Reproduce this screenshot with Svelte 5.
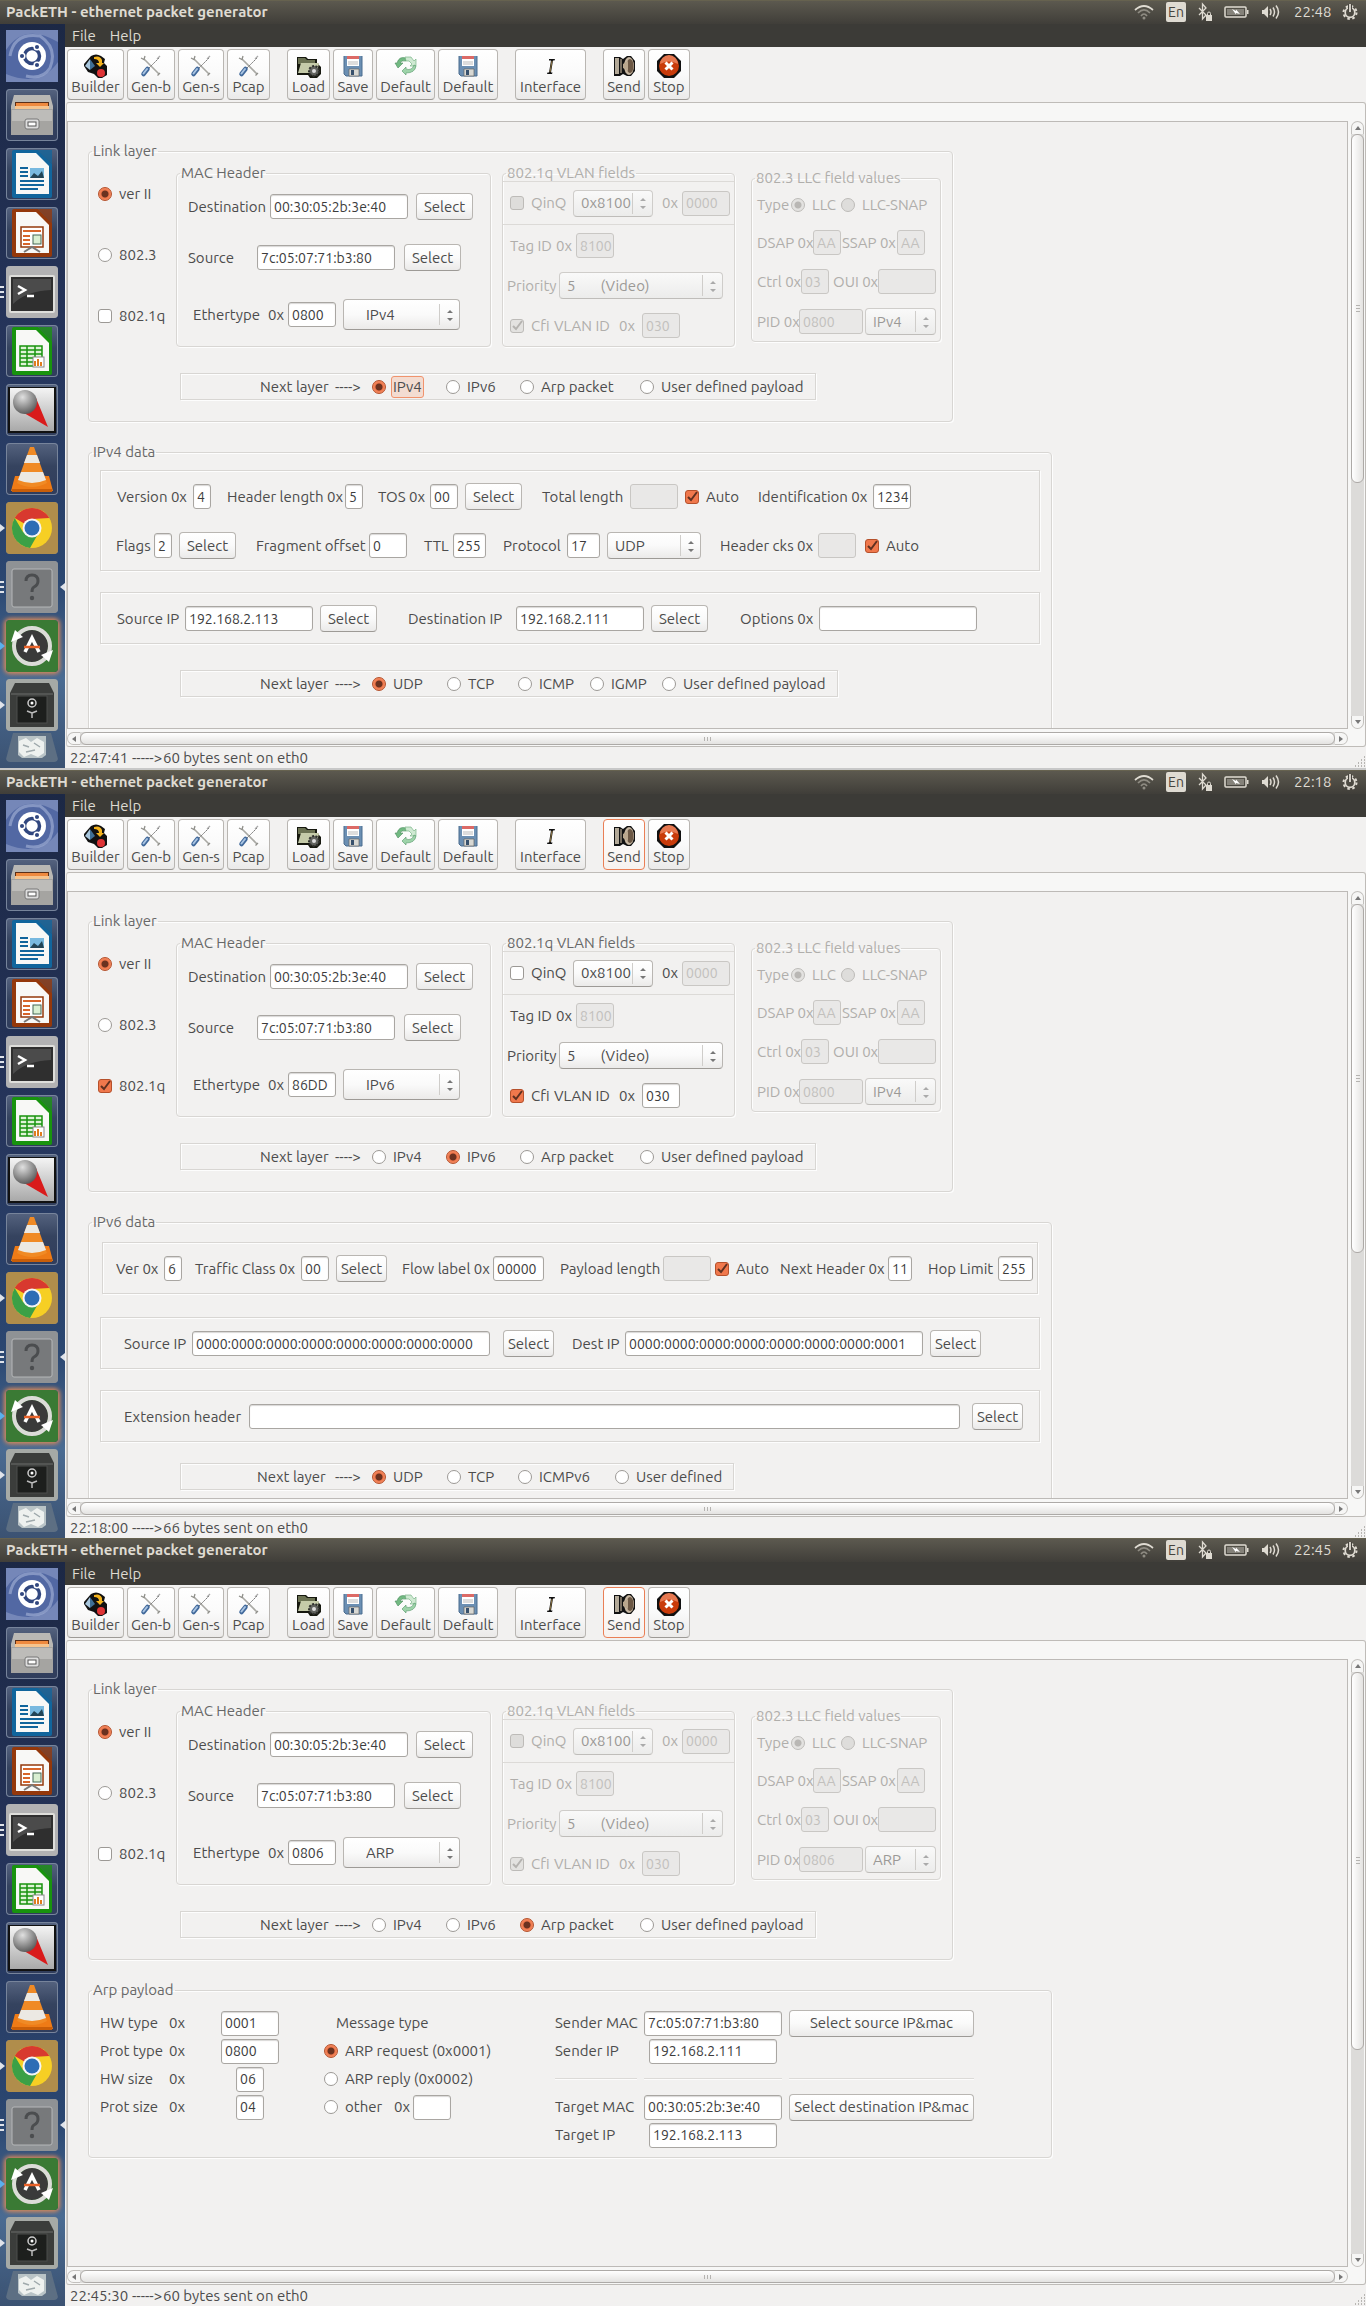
<script>
  const screens = [
    {
      id: 'a', kind: 'ipv4', clock: '22:48', status: '22:47:41', bytes: '60 bytes sent on eth0',
      vlan: false, type: '0800', typeName: 'IPv4', pid: '0800', pidName: 'IPv4', next: 'IPv4', focus: true, thumb: 60
    },
    {
      id: 'b', kind: 'ipv6', clock: '22:18', status: '22:18:00', bytes: '66 bytes sent on eth0',
      vlan: true, type: '86DD', typeName: 'IPv6', pid: '0800', pidName: 'IPv4', next: 'IPv6', send: true, thumb: 60
    },
    {
      id: 'c', kind: 'arp', clock: '22:45', status: '22:45:30', bytes: '60 bytes sent on eth0',
      vlan: false, type: '0806', typeName: 'ARP', pid: '0806', pidName: 'ARP', next: 'Arp packet', send: true, thumb: 65
    }
  ];
  const tools = [
    ['Builder', 'builder'], ['Gen-b', 'tools'], ['Gen-s', 'tools'], ['Pcap', 'tools'], null,
    ['Load', 'load'], ['Save', 'save'], ['Default', 'cycle'], ['Default', 'save'], null,
    ['Interface', 'iface'], null, ['Send', 'send'], ['Stop', 'stop']
  ];
  const apps = [
    ['dash', 'Dash home', ''], ['files', 'Files', ''], ['writer', 'Writer', ''], ['impress', 'Impress', ''],
    ['term', 'Terminal', 'three'], ['calc', 'Calc', ''], ['ball', 'Xpilot', ''], ['vlc', 'VLC', ''],
    ['chrome', 'Chrome', 'one'], ['unknown', 'PackETH', 'two active'], ['updater', 'Software Updater', 'blue'],
    ['safe', 'Disk', 'one'], ['trash', 'Trash', '']
  ];
</script>

{#snippet field(text, value, w, off = false)}
  <label class="pair"><span>{text}</span><input type="text" class="w{w}" {value} disabled={off} /></label>
{/snippet}

{#snippet field2(text, prefix, value, w, off = false)}
  <label class="pair"><span>{text}</span><span>{prefix}</span><input type="text" class="w{w}" {value} disabled={off} /></label>
{/snippet}

{#snippet radio(name, text, checked = false, off = false, focus = false)}
  <label class="opt" class:off><input type="radio" {name} {checked} disabled={off} /><span class:focus>{text}</span></label>
{/snippet}

{#snippet check(text, checked = false, off = false)}
  <label class="opt" class:off><input type="checkbox" {checked} disabled={off} /><span>{text}</span></label>
{/snippet}

{#snippet pick(label, value, cls, off = false)}
  <span class="pick {cls}" class:off>
    <select aria-label={label} disabled={off}><option>{value}</option></select>
    <svg viewBox="0 0 8 12" width="8" height="12" aria-hidden="true"><path d="M1 4 4 1 7 4ZM1 9 4 12 7 9Z" /></svg>
  </span>
{/snippet}

{#snippet toolIcon(k)}
  <svg viewBox="0 0 24 24" width="24" height="24" aria-hidden="true">
    {#if k === 'builder'}
      <path d="M7 2 Q12-1 17 2L21 5 20 9 23 12V21L18 24H14L10 20 4 18 0 12V10Z" fill="#111" />
      <path d="M6 5 1 12 6 16Z" fill="#a8c6dd" /><path d="M6 5 11 12 6 16Z" fill="#3f6f96" />
      <path d="M10 3Q16 1 18 6V9H20L16 13 12 9H15Q15 5 10 5Z" fill="#f3b31e" /><circle cx="17" cy="19" r="4" fill="#df3436" />
    {:else if k === 'tools'}
      <path d="M5 5 20 20" stroke="#a9a9a4" stroke-width="1.600" /><path d="M2 4 5 5.500 6 2M18.500 21.500 21 19" fill="none" stroke="#8f8f8a" stroke-width="1.300" />
      <path d="M20 4 10 14" stroke="#6c6c6c" stroke-width="1" stroke-dasharray="2 1" /><path d="M18 5 21 2" stroke="#aaa" stroke-width="1.300" />
      <path d="M8.500 15 4.500 20" stroke="#41699b" stroke-width="4.500" stroke-linecap="round" /><path d="M8 15 4.500 19.500" stroke="#a9c4e2" stroke-width="2" stroke-linecap="round" />
    {:else if k === 'load'}
      <path d="M0 3H9L11 5H20V9L24 13V20L20 24H13L11 21H0Z" fill="#16180f" /><path d="M1 4H8L10 6H18V10H1Z" fill="#6b7253" />
      <path d="M4 9H22L20 19H1Z" fill="#c5cba9" /><circle cx="17" cy="17" r="5" fill="#62645f" stroke="#30312e" stroke-dasharray="2 1.5" stroke-width="2" /><circle cx="17" cy="17" r="2" fill="#ddd" />
    {:else if k === 'save'}
      <path d="M3 2H21V22H5L3 20Z" fill="#6b8fb3" /><path d="M3 2V20L5 22H21V2" fill="none" stroke="#4b6c8f" /><path d="M6 2H18V12H6Z" fill="#fff" /><path d="M6 2H18V5H6Z" fill="#dc6a66" />
      <path d="M7 8H17M7 10H17" stroke="#bbb" /><path d="M8 15H18V22H8Z" fill="#d8d8d3" stroke="#666" stroke-width=".7" /><path d="M10 16H13V21H10Z" fill="#37506c" />
    {:else if k === 'cycle'}
      <path d="M12 4Q5 2 3 9L1 9 4 14 9 9H6Q7 6 12 7Z" fill="#72b982" stroke="#4d8d60" stroke-width=".6" />
      <path d="M11 3 17 3 20 7 22 5V12H16L18 10 15 7H12Z" fill="#cfe9d2" stroke="#6aab79" stroke-width=".6" />
      <path d="M8 17 12 13V15Q18 17 20 11L22 12Q21 19 12 19V21Z" fill="#9dd3a9" stroke="#549768" stroke-width=".6" />
    {:else if k === 'iface'}
      <path d="M10 5H16L15.500 6.500H14L12 18.500H13.500L13 20H8L8.500 18.500H10L12 6.500H10Z" fill="#111" /><path d="M13 7 11 18" stroke="#8d7544" />
    {:else if k === 'send'}
      <path d="M2 3H8L11 5 15 2H19L23 7V17L19 22H15L11 20 8 22H2Z" fill="#111" /><path d="M3 4H7V20H3Z" fill="#b3a998" /><path d="M8 5H10V19H8Z" fill="#756c5f" />
      <ellipse cx="17" cy="12" rx="5" ry="9" fill="#c7b6a0" /><ellipse cx="18" cy="12" rx="3.500" ry="7" fill="#6c5845" /><path d="M11 10 16 7V17L11 14Z" fill="#baa78d" />
    {:else}
      <path d="M7 0H17L24 7V17L17 24H7L0 17V7Z" fill="#111" /><circle cx="12" cy="12" r="10" fill="#c93b0a" /><path d="M3 10A9 9 0 0 1 21 10Q12 5 3 10" fill="#e67850" />
      <path d="M8.500 8.500 15.500 15.500M15.500 8.500 8.500 15.500" stroke="#fff" stroke-width="3" />
    {/if}
  </svg>
{/snippet}

{#snippet appIcon(k)}
  <svg viewBox="0 0 52 52" width="52" height="52" aria-hidden="true">
    {#if k === 'dash'}
      <rect width="52" height="52" rx="4" fill="#5268a3" /><path d="M0 20Q18-8 52 12V0H0ZM52 32Q34 58 0 44V52H52Z" fill="#7587b8" />
      <path d="M4 26Q8 2 34 6Q52 18 44 38Q36 50 20 46" fill="none" stroke="#a8b6d8" stroke-width="3" opacity=".6" />
      <circle cx="26" cy="26" r="14" fill="#fff" /><circle cx="26" cy="26" r="7.500" fill="none" stroke="#31477f" stroke-width="3.500" />
      <g stroke="#fff" stroke-width="1.500" fill="#31477f"><circle cx="16" cy="26" r="2.800" /><circle cx="31" cy="17" r="2.800" /><circle cx="31" cy="35" r="2.800" /></g>
    {:else if k === 'files'}
      <path d="M8 6H44L47 17V44H5V17Z" fill="#b9b8b4" /><path d="M9 13H43V20H9Z" fill="#5b2f18" /><path d="M10 14H42V20H10Z" fill="#ef8a3f" /><path d="M9 17H43V20H9Z" fill="#f6c48e" />
      <path d="M5 20H47V46H5Z" fill="#a5a4a1" /><path d="M6 21H46V32H6Z" fill="#bdbcb9" /><rect x="19" y="30" width="14" height="10" rx="2" fill="#ddd" stroke="#777" /><rect x="22" y="33" width="8" height="4" fill="#fff" stroke="#555" />
    {:else if k === 'writer' || k === 'impress' || k === 'calc'}
      {@const c = k === 'writer' ? '#11659c' : k === 'impress' ? '#94380b' : '#18930e'}
      <path d="M8 2H32L46 16V48Q46 50 44 50H8Q6 50 6 48V4Q6 2 8 2Z" fill={c} /><path d="M32 2H46V16Z" fill={c} opacity=".75" />
      <path d="M10 5H30L43 18V46H10Z" fill="#f8f8f6" />
      {#if k === 'writer'}
        <path d="M14 20H22M14 24H22M14 28H22M14 33H38M14 37H38M14 41H32" stroke={c} stroke-width="2" /><path d="M24 20H38V30H24Z" fill="#78b9df" /><path d="M24 30 28 25 32 28 36 23 38 30Z" fill="#245" />
      {:else if k === 'impress'}
        <rect x="15" y="20" width="22" height="20" fill="#fff" stroke={c} stroke-width="1.500" /><path d="M17 24H35M17 29H24M17 33H24M17 37H24" stroke="#d8652a" stroke-width="2" /><rect x="27" y="28" width="8" height="9" fill="#d9efd2" stroke="#465" /><path d="M18 45 26 40 34 45" fill="none" stroke="#777" stroke-width="2" />
      {:else}
        <path d="M14 21H36V41H14ZM14 25H36M14 29H36M14 33H36M14 37H36M21 21V41M29 21V41" fill="#dff3d7" stroke={c} stroke-width="1.500" /><rect x="27" y="32" width="11" height="10" fill="#fff" stroke="#888" /><path d="M29 41V36M32 41V34M35 41V37" stroke="#e07c1f" stroke-width="2" />
      {/if}
    {:else if k === 'term'}
      <rect width="52" height="52" rx="4" fill="#b2b2b3" /><rect x="3" y="9" width="46" height="38" rx="2" fill="#dededb" /><rect x="5" y="11" width="42" height="34" fill="#2f2f2f" /><path d="M7 13H45V24Q20 25 7 38Z" fill="#4b4b4b" />
      <path d="M12 20 19 24 12 28M21 30H28" fill="none" stroke="#fff" stroke-width="2.500" />
    {:else if k === 'ball'}
      <defs>
        <radialGradient id="ball-grey" cx=".4" cy=".3" r=".7"><stop offset="0" stop-color="#e0e0e0" /><stop offset="1" stop-color="#5e5e5e" /></radialGradient>
        <linearGradient id="ball-bg" x2="0" y2="1"><stop offset="0" stop-color="#f4f4f4" /><stop offset="1" stop-color="#a9a9a9" /></linearGradient>
      </defs>
      <rect x="2" y="3" width="48" height="46" fill="#111" /><rect x="4" y="4" width="44" height="43" fill="url(#ball-bg)" /><path d="M30 14 42 43 18 29Z" fill="#d91b1b" /><circle cx="19" cy="18" r="12" fill="url(#ball-grey)" />
    {:else if k === 'vlc'}
      <path d="M9 33H43L47 48H5Z" fill="#ee7b16" /><path d="M24 4H28L41 40Q26 48 11 40Z" fill="#f08a25" /><path d="M21 12H31L34 20H18ZM15 29H37L40 37Q26 43 12 37Z" fill="#ece9e3" /><path d="M6 46H46V49H6Z" fill="#c95e08" />
    {:else if k === 'chrome'}
      <rect width="52" height="52" rx="4" fill="#b08d4b" /><circle cx="26" cy="26" r="20" fill="#f6cf24" /><path d="M26 26 8.700 16A20 20 0 0 1 43.300 16L26 17Z" fill="#d8392f" /><path d="M8.700 16A20 20 0 0 0 24 46L32 32 17 30Z" fill="#3ba046" />
      <circle cx="26" cy="26" r="9.500" fill="#f5f5f5" /><circle cx="26" cy="26" r="7.500" fill="#2d6db5" />
    {:else if k === 'unknown'}
      <rect width="52" height="52" rx="4" fill="#8f9295" /><rect x="6" y="8" width="40" height="38" rx="2" fill="#77797b" stroke="#b5b7b9" />
      <path d="M20 20Q20 14 26 14T32 20Q32 24 28 26Q26 27 26 31" fill="none" stroke="#4b4d4f" stroke-width="3" /><circle cx="26" cy="37" r="2.200" fill="#4b4d4f" />
    {:else if k === 'updater'}
      <rect width="52" height="52" rx="4" fill="#3a7a34" /><circle cx="26" cy="26" r="16" fill="#3a3a3a" /><circle cx="26" cy="26" r="18" fill="none" stroke="#dcdcd8" stroke-width="4" />
      <path d="M5 22 9 10 17 17ZM47 30 43 42 35 35Z" fill="#fff" /><path d="M19 32 26 18 33 32" fill="none" stroke="#fff" stroke-width="3.500" /><path d="M18 27H34" stroke="#e8622a" stroke-width="2.500" />
    {:else if k === 'safe'}
      <rect width="52" height="52" rx="4" fill="#a6aaa6" /><path d="M9 4H43L48 14V48H4V14Z" fill="#3b3d3b" /><path d="M5 15H47" stroke="#6c6e6c" /><rect x="11" y="17" width="30" height="27" fill="#1d1f1d" stroke="#4c4e4c" /><circle cx="26" cy="24" r="4" fill="none" stroke="#ccc" stroke-width="1.500" /><circle cx="26" cy="24" r="1.500" fill="#fff" /><path d="M26 34V39M26 34 21 32M26 34 31 32" stroke="#bbb" stroke-width="1.500" />
    {:else}
      <path d="M7 0H45L52 26Q52 29 49 29H3Q0 29 0 26Z" fill="#5d6f83" /><path d="M12 3H40V22L36 25H16L12 22Z" fill="#b9c3c6" /><path d="M13 8 20 5 25 9 31 5 38 9V20L32 24 25 21 18 24 13 19Z" fill="#eef1ef" />
      <path d="M17 12 23 14M28 10 34 14M20 19 29 17" stroke="#9fa9ac" stroke-width="1.500" />
    {/if}
  </svg>
{/snippet}

<main class="page">
  {#each screens as s (s.id)}
    <section class="screen">
      <header class="title">
        <h1>PackETH - ethernet packet generator</h1>
        <svg class="i-wifi" viewBox="0 0 20 16" width="20" height="16" aria-hidden="true"><g fill="none" stroke-width="1.700"><path d="M1 6Q10-2 19 6" stroke="#dfdbd2" /><path d="M4 9Q10 3 16 9M7 12Q10 8 13 12" stroke="#8f8c83" /></g><circle cx="10" cy="14" r="1.500" fill="#8f8c83" /></svg>
        <span class="lang">En</span>
        <svg class="i-bt" viewBox="0 0 16 20" width="16" height="20" aria-hidden="true"><path d="M2 6 9 13 5.500 17V2L9 6 2 13" fill="none" stroke="#dfdbd2" stroke-width="1.300" /><path d="M9 13H15V19H9Z" fill="#dfdbd2" /><path d="M10.500 13V11.500A1.500 1.500 0 0 1 13.500 11.500V13" fill="none" stroke="#dfdbd2" /></svg>
        <svg class="i-bat" viewBox="0 0 25 12" width="25" height="12" aria-hidden="true"><rect x="1" y="1" width="21" height="10" rx="1" fill="none" stroke="#dfdbd2" stroke-width="1.500" /><rect x="3" y="3" width="17" height="6" fill="#85827a" /><path d="M23 4H24.500V8H23Z" fill="#dfdbd2" /><path d="M8 3 12 5V3.500L16 8 12 7V8.500Z" fill="#fff" /></svg>
        <svg class="i-vol" viewBox="0 0 20 16" width="20" height="16" aria-hidden="true"><path d="M1 6H3L7 2V14L3 10H1Z" fill="#dfdbd2" /><path d="M9 5Q11 8 9 11M12 3.500Q15 8 12 12.500M15 1.500Q20 8 15 14.500" fill="none" stroke="#dfdbd2" stroke-width="1.500" /></svg>
        <time>{s.clock}</time>
        <svg class="i-gear" viewBox="0 0 16 16" width="16" height="16" aria-hidden="true"><circle cx="8" cy="8.500" r="6.500" fill="none" stroke="#dfdbd2" stroke-width="2" stroke-dasharray="2.500 2.600" /><circle cx="8" cy="8.500" r="4.800" fill="none" stroke="#dfdbd2" stroke-width="1.700" /><path d="M8 0V8" stroke="#45433d" stroke-width="4" /><path d="M8 0V8" stroke="#dfdbd2" stroke-width="1.800" /></svg>
      </header>

      <nav class="launcher" aria-label="Launcher">
        {#each apps as [k, name, mark]}
          <button class="app {k} {mark}" aria-label={name}>{@render appIcon(k)}</button>
        {/each}
      </nav>

      <div class="window">
        <nav class="menu"><button>File</button><button>Help</button></nav>
        <div class="toolbar">
          {#each tools as t}
            {#if t}
              <button class="tool" class:hot={t[0] === 'Send' && s.send}>{@render toolIcon(t[1])}<span>{t[0]}</span></button>
            {:else}
              <i></i>
            {/if}
          {/each}
        </div>

        <div class="book">
          <div class="pane">
            <fieldset class="link">
              <legend>Link layer</legend>
              <div class="top">
                <div class="vers">
                  {@render radio(s.id + 'ver', 'ver II', true)}
                  {@render radio(s.id + 'ver', '802.3')}
                  {@render check('802.1q', s.vlan)}
                </div>

                <fieldset class="mac">
                  <legend>MAC Header</legend>
                  <div class="inner">
                    <div class="row m1">{@render field('Destination', '00:30:05:2b:3e:40', 138)}<button class="btn">Select</button></div>
                    <div class="row m2">{@render field('Source', '7c:05:07:71:b3:80', 138)}<button class="btn">Select</button></div>
                    <div class="row m3">{@render field2('Ethertype', '0x', s.type, 48)}{@render pick('Ethertype name', s.typeName, 'tall')}</div>
                  </div>
                </fieldset>

                <fieldset class="vlan" class:dim={!s.vlan}>
                  <legend>802.1q VLAN fields</legend>
                  <div class="row v1">
                    {@render check('QinQ', false, !s.vlan)}{@render pick('Outer tag', '0x8100', 'w80', !s.vlan)}
                    <label class="pair"><span class="faint" class:live={s.vlan}>0x</span><input type="text" class="w48" value="0000" disabled /></label>
                  </div>
                  <div class="row v2">{@render field2('Tag ID', '0x', '8100', 38, true)}</div>
                  <div class="row v3"><span>Priority</span>{@render pick('Priority', '5\u2003\u2002\u2009(Video)', 'w164', !s.vlan)}</div>
                  <div class="row v4">{@render check('Cfi', true, !s.vlan)}{@render field2('VLAN ID', '0x', '030', 38, !s.vlan)}</div>
                </fieldset>

                <fieldset class="llc dim">
                  <legend>802.3 LLC field values</legend>
                  <div class="inner">
                    <div class="row l1"><span>Type</span>{@render radio(s.id + 'llc', 'LLC', true, true)}{@render radio(s.id + 'llc', 'LLC-SNAP', false, true)}</div>
                    <div class="row l2">{@render field('DSAP 0x', 'AA', 28, true)}{@render field('SSAP 0x', 'AA', 28, true)}</div>
                    <div class="row l3">{@render field('Ctrl 0x', '03', 28, true)}{@render field('OUI 0x', '', 58, true)}</div>
                    <div class="row l4">{@render field('PID 0x', s.pid, 64, true)}{@render pick('PID name', s.pidName, 'w71', true)}</div>
                  </div>
                </fieldset>
              </div>
              <div class="row box next n1">
                <span>Next layer</span><span>----&gt;</span>
                {#each ['IPv4', 'IPv6', 'Arp packet', 'User defined payload'] as n}
                  {@render radio(s.id + 'next', n, s.next === n, false, !!s.focus && s.next === n)}
                {/each}
              </div>
            </fieldset>

            {#if s.kind === 'ipv4'}
              <fieldset class="data">
                <legend>IPv4 data</legend>
                <div class="inner">
                  <div class="box pad gap8">
                    <div class="row a1">
                      {@render field('Version 0x', '4', 18)}{@render field('Header length 0x', '5', 18)}{@render field('TOS 0x', '00', 28)}
                      <button class="btn">Select</button>{@render field('Total length', '', 48, true)}{@render check('Auto', true)}{@render field('Identification 0x', '1234', 38)}
                    </div>
                    <div class="row a2">
                      {@render field('Flags', '2', 18)}<button class="btn">Select</button>{@render field('Fragment offset', '0', 38)}{@render field('TTL', '255', 33)}
                      {@render field('Protocol', '17', 33)}{@render pick('Protocol name', 'UDP', 'w94')}{@render field('Header cks 0x', '', 38, true)}{@render check('Auto', true)}
                    </div>
                  </div>
                  <div class="box pad gap21">
                    <div class="row a3">
                      {@render field('Source IP', '192.168.2.113', 128)}<button class="btn">Select</button>
                      {@render field('Destination IP', '192.168.2.111', 128)}<button class="btn">Select</button>{@render field('Options 0x', '', 158)}
                    </div>
                  </div>
                  <div class="row box next n2">
                    <span>Next layer</span><span>----&gt;</span>
                    {#each ['UDP', 'TCP', 'ICMP', 'IGMP', 'User defined payload'] as n}{@render radio('ip4next', n, n === 'UDP')}{/each}
                  </div>
                  <div class="rest"></div>
                </div>
              </fieldset>
            {:else if s.kind === 'ipv6'}
              <fieldset class="data">
                <legend>IPv6 data</legend>
                <div class="inner">
                  <div class="box pad gap10">
                    <div class="row b1">
                      {@render field('Ver 0x', '6', 18)}{@render field('Traffic Class 0x', '00', 28)}<button class="btn slim">Select</button>
                      {@render field('Flow label 0x', '00000', 51)}{@render field('Payload length', '', 48, true)}{@render check('Auto', true)}
                      {@render field('Next Header 0x', '11', 24)}{@render field('Hop Limit', '255', 35)}
                    </div>
                  </div>
                  <div class="box pad gap23">
                    <div class="row b2">
                      {@render field('Source IP', '0000:0000:0000:0000:0000:0000:0000:0000', 298)}<button class="btn slim">Select</button>
                      {@render field('Dest IP', '0000:0000:0000:0000:0000:0000:0000:0001', 298)}<button class="btn slim">Select</button>
                    </div>
                  </div>
                  <div class="box pad gap21">
                    <div class="row b3">{@render field('Extension header', '', 711)}<button class="btn slim">Select</button></div>
                  </div>
                  <div class="row box next n3">
                    <span>Next layer</span><span>----&gt;</span>
                    {#each ['UDP', 'TCP', 'ICMPv6', 'User defined'] as n}{@render radio('ip6next', n, n === 'UDP')}{/each}
                  </div>
                  <div class="rest"></div>
                </div>
              </fieldset>
            {:else}
              <fieldset class="data">
                <legend>Arp payload</legend>
                <div class="inner arp">
                  <div class="g1">
                    {@render field2('HW type', '0x', '0001', 58)}{@render field2('Prot type', '0x', '0800', 58)}
                    {@render field2('HW size', '0x', '06', 28)}{@render field2('Prot size', '0x', '04', 28)}
                  </div>
                  <div class="g2">
                    <span class="msg">Message type</span>
                    {@render radio('arpmsg', 'ARP request (0x0001)', true)}
                    {@render radio('arpmsg', 'ARP reply (0x0002)')}
                    <div class="row other">{@render radio('arpmsg', 'other')}{@render field('0x', '', 38)}</div>
                  </div>
                  <div class="g3">
                    {@render field('Sender MAC', '7c:05:07:71:b3:80', 138)}<button class="btn">Select source IP&amp;mac</button>
                    {@render field('Sender IP', '192.168.2.111', 128)}<i></i>
                    <hr /><hr /><hr />
                    {@render field('Target MAC', '00:30:05:2b:3e:40', 138)}<button class="btn">Select destination IP&amp;mac</button>
                    {@render field('Target IP', '192.168.2.113', 128)}<i></i>
                  </div>
                </div>
              </fieldset>
            {/if}
          </div>

          <div class="bar vert">
            <span class="cap"><svg viewBox="0 0 6 4" width="6" height="4"><path d="M0 4 3 0 6 4Z" /></svg></span>
            <div class="trough"><div class="thumb" style="height: {s.thumb}%"><b></b></div></div>
            <span class="cap"><svg viewBox="0 0 6 4" width="6" height="4"><path d="M0 0 3 4 6 0Z" /></svg></span>
          </div>
          <div class="bar horiz">
            <span class="cap"><svg viewBox="0 0 4 6" width="4" height="6"><path d="M4 0 0 3 4 6Z" /></svg></span>
            <div class="trough"><div class="thumb"><b></b></div></div>
            <span class="cap"><svg viewBox="0 0 4 6" width="4" height="6"><path d="M0 0 4 3 0 6Z" /></svg></span>
          </div>
        </div>

        <footer class="status"><span>{s.status}</span><span>-----&gt;</span><span>{s.bytes}</span>
          <svg viewBox="0 0 12 12" width="12" height="12" aria-hidden="true"><path d="M10 1h1M7 4h1M10 4h1M4 7h1M7 7h1M10 7h1M1 10h1M4 10h1M7 10h1M10 10h1" stroke="#a5a39f" stroke-width="1.500" /></svg>
        </footer>
      </div>
    </section>
  {/each}
</main>

<style>
  :global(body) { margin: 0; background: #c9c9c9; }
  .page {
    display: flex; flex-direction: column; min-height: 100vh;
    font: 15px/20px Ubuntu, 'Noto Sans', sans-serif; color: #4c4c4c;
  }
  .page :global(*), .page { box-sizing: border-box; }
  button, input, select { font: inherit; color: inherit; margin: 0; }
  span, legend { white-space: nowrap; }
  .screen {
    flex: 1 0 auto; display: grid; grid-template-columns: 65px minmax(0, 1fr); grid-template-rows: 24px minmax(744px, 1fr);
    background: #f2f1f0;
  }
  .screen:first-child { border-bottom: 2px solid #c8c8c8; }

  .title {
    grid-column: 1 / -1; display: flex; align-items: center; padding: 0 8px 2px 6px;
    background: linear-gradient(#5c594f, #403e39); border-top: 1px solid #66624f; color: #dfdbd2;
  }
  h1 { flex: 1; margin: 0; font-size: 15px; line-height: 20px; font-weight: 700; }
  .lang {
    width: 20px; height: 20px; margin: 0 11px 0 12px; border-radius: 2px; background: #dfdbd2; color: #45433d;
    font-size: 14px; text-align: center;
  }
  .i-bat { margin: 0 12px 0 11px; }
  time { margin: 0 12px 0 13px; width: 36px; }

  .launcher {
    display: flex; flex-direction: column; gap: 7px; padding: 6px; height: 100%; overflow: hidden;
    background: linear-gradient(#1c2845, #26355c 45%, #2b4771 75%, #4a6b92 88%, #3b5272);
  }
  .app {
    position: relative; flex: none; width: 52px; height: 52px; padding: 0; border: 0; border-radius: 4px;
    background: linear-gradient(#55637f, #35435f 45%, #303d5c); box-shadow: inset 0 0 0 1px #77849b;
  }
  .app svg { display: block; }
  .app.updater { box-shadow: 0 0 4px 2px #d88a5a; }
  .app.trash { height: 29px; margin-top: -5px; background: none; box-shadow: none; overflow: hidden; }
  .one::before, .blue::before {
    content: ''; position: absolute; left: -6px; top: 22px; border: 4px solid transparent; border-left: 5px solid #dfe3ea; border-right: 0;
  }
  .blue::before { border-left-color: #5ab0ee; }
  .three::before, .two::before {
    content: ''; position: absolute; left: -6px; top: 20px; width: 4px; height: 12px;
    background: repeating-linear-gradient(#dfe3ea 0 2px, transparent 2px 5px);
  }
  .active::after {
    content: ''; position: absolute; right: -7px; top: 22px; border: 4px solid transparent; border-right: 5px solid #dfe3ea; border-left: 0;
  }

  .window { display: flex; flex-direction: column; min-width: 0; }
  .menu { display: flex; gap: 14px; height: 23px; padding: 0 7px; background: #3c3b37; color: #dfdbd2; }
  .menu button { border: 0; padding: 0; background: none; }
  .toolbar {
    display: grid; height: 55px; padding: 2px; column-gap: 3px; grid-template-rows: 51px;
    grid-template-columns: 57px 48px 46px 43px 11px 43px 40px 59px 60px 11px 71px 11px 42px 42px;
  }
  .tool, .btn, .pick {
    border: 1px solid #b9b6b2; border-bottom-color: #9d9a96; border-radius: 4px;
    background: linear-gradient(#fff, #fafafa 50%, #ebeae9);
  }
  .tool { display: flex; flex-direction: column; align-items: center; padding: 4px 0 0; }
  .tool span { line-height: 18px; }
  .tool.hot { border-color: #ea7f55; background: linear-gradient(#fff, #f7f2ef); }

  .book {
    flex: 1; display: grid; grid-template-columns: minmax(0, 1fr) 13px; grid-template-rows: minmax(0, 1fr) 13px; gap: 3px;
    margin-left: 1px; padding: 18px 1px 1px 0; background: #f7f7f6; border: 1px solid #bfbcb8; border-left-color: #cfccc9; border-radius: 3px;
  }
  .pane {
    overflow: hidden; padding: 19px 0 0 20px; border: 1px solid #bdbab7; background: #f2f1f0;
    height: 0; min-height: 100%;
  }

  fieldset {
    min-width: 0; margin: 0; padding: 0; border: 1px solid #d8d6d3; border-radius: 4px;
    box-shadow: 1px 1px 0 #fdfdfd, inset 1px 1px 0 #fdfdfd;
  }
  legend { margin-left: 3px; padding: 0 1px; color: #686868; line-height: 20px; }
  .link { width: 865px; padding-bottom: 21px; }
  .top { display: flex; align-items: flex-start; padding: 2px 0 0 9px; }
  .vers { display: flex; flex-direction: column; gap: 41px; width: 78px; padding-top: 21px; }
  .mac { width: 315px; height: 184px; }
  .mac .inner { padding: 10px 0 0 11px; }
  .vlan { width: 233px; height: 184px; margin-left: 11px; }
  .llc { width: 190px; height: 174px; margin: 5px 0 0 16px; }
  .llc .inner { padding: 3px 0 0 5px; }
  .dim, .dim legend, .opt.off, .faint { color: #b0aeab; }
  .live { color: #4c4c4c; }

  .row { display: grid; align-items: center; justify-content: start; min-height: 27px; }
  .pair { display: contents; }
  .box { border: 1px solid #d8d6d3; box-shadow: 1px 1px 0 #fdfdfd, inset 1px 1px 0 #fdfdfd; }

  .m1 { grid-template-columns: 82px 146px 57px; }
  .m2 { grid-template-columns: 69px 147px 57px; margin-top: 24px; }
  .m3 { grid-template-columns: 75px 20px 55px 117px; margin: 28px 0 0 5px; }
  .v1 { grid-template-columns: 63px 89px 20px 48px; height: 44px; margin-top: -2px; padding-left: 7px; border: solid #dcdad7; border-width: 1px 0; }
  .v2 { grid-template-columns: 46px 20px 38px; margin-top: 7px; padding-left: 7px; }
  .v3 { grid-template-columns: 52px 164px; margin-top: 13px; padding-left: 4px; }
  .v4 { grid-template-columns: 44px 65px 23px 38px; margin-top: 13px; padding-left: 7px; }
  .l1 { grid-template-columns: 34px 50px auto; }
  .l2 { grid-template-columns: 56px 29px 55px 28px; margin-top: 11px; }
  .l3 { grid-template-columns: 44px 32px 45px 58px; margin-top: 12px; }
  .l4 { grid-template-columns: 42px 66px 71px; margin-top: 13px; }
  .next { height: 27px; padding-left: 79px; }
  .n1 { grid-template-columns: 75px 37px 74px 74px 120px auto; width: 636px; margin: 26px 0 0 91px; }
  .n2 { grid-template-columns: 75px 37px 75px 71px 72px 72px auto; width: 658px; margin: 26px 0 0 80px; }
  .n3 { grid-template-columns: 78px 37px 75px 71px 97px auto; width: 554px; margin: 21px 0 0 80px; padding-left: 76px; }

  .data { width: 964px; margin-top: 20px; }
  .data .inner { padding: 0 11px; }
  .rest { height: 60px; }
  .pad { padding: 12px 0 11px 16px; }
  .gap8 { margin-top: 8px; }
  .gap10 { margin: 10px 2px 0 2px; padding-left: 13px; }
  .gap21 { margin-top: 21px; }
  .gap23 { margin-top: 23px; }
  .gap8 .row + .row { margin-top: 22px; }
  .a1 { grid-template-columns: 76px 34px 118px 33px 52px 35px 77px 88px 55px 73px 115px 38px; }
  .a2 { grid-template-columns: 38px 25px 77px 113px 55px 29px 50px 64px 40px 113px 98px 47px auto; margin-left: -1px; }
  .a3 { grid-template-columns: 68px 135px 88px 108px 135px 89px 79px 158px; }
  .b1 { grid-template-columns: 48px 31px 106px 35px 66px 91px 67px 103px 52px 65px 108px 40px 70px 35px; }
  .b2 { grid-template-columns: 68px 311px 69px 53px 305px 51px; margin-left: 7px; }
  .b3 { grid-template-columns: 125px 723px 51px; margin-left: 7px; }

  .data .arp { display: flex; padding: 9px 11px 8px; }
  .arp > div { display: grid; align-content: start; align-items: center; grid-auto-rows: 28px; }
  .arp .g1 { grid-template-columns: 69px 52px 58px; width: 224px; }
  .arp .g2 { width: 231px; }
  .arp .g3 { grid-template-columns: 82px 138px 185px; column-gap: 7px; }
  .g1 input, .g3 input { justify-self: center; }
  .msg { padding-left: 12px; }
  .other { grid-template-columns: 70px 19px 38px; }
  hr { width: 100%; margin: 0; border: 0; border-top: 1px solid #dcdad7; border-bottom: 1px solid #fcfcfc; }

  input[type='text'] {
    height: 25px; padding: 0 0 0 3px; border: 1px solid #a9a6a2; border-radius: 3px; background: #fff; color: #3c3c3c;
    font-size: 14px; box-shadow: inset 0 1px 1px #d9d8d6; outline: 0;
  }
  input[type='text']:disabled { background: #e9e8e7; border-color: #c9c7c4; color: #c2c0bd; box-shadow: none; }
  .w18 { width: 18px; }
  .w24 { width: 24px; }
  .w28 { width: 28px; }
  .w33 { width: 33px; }
  .w35 { width: 35px; }
  .w38 { width: 38px; }
  .w48 { width: 48px; }
  .w51 { width: 51px; }
  .w58 { width: 58px; }
  .w64 { width: 64px; }
  .w71 { width: 71px; }
  .w80 { width: 80px; }
  .w94 { width: 94px; }
  .w128 { width: 128px; }
  .w138 { width: 138px; }
  .w158 { width: 158px; }
  .w164 { width: 164px; }
  .w298 { width: 298px; }
  .w711 { width: 711px; }

  .btn { width: 57px; height: 27px; padding: 0; white-space: nowrap; }
  .btn.slim { width: 51px; }
  .g3 .btn { width: 100%; }

  .pick { display: grid; grid-template-columns: minmax(0, 1fr) 19px; align-items: center; height: 27px; }
  .pick.tall { width: 117px; height: 31px; }
  .pick select {
    appearance: none; width: 100%; height: 21px; padding: 0 0 0 7px; border: 0; border-right: 1px solid #cfcdca; border-radius: 0;
    background: none; line-height: 20px; outline: 0; opacity: 1;
  }
  .pick.tall select { padding-left: 22px; }
  .pick svg { justify-self: center; fill: #777; }
  .pick.off { color: #9b9996; border-color: #cfcdca; border-bottom-color: #bfbdba; background: linear-gradient(#f9f9f9, #ececeb); }
  .pick.off svg { fill: #aaa; }

  .opt { display: flex; align-items: center; gap: 7px; height: 20px; }
  .opt input {
    appearance: none; flex: none; width: 14px; height: 14px; border: 1px solid #9c9995; background: #fff center / 100% no-repeat;
  }
  .opt input[type='radio'] { border-radius: 50%; }
  .opt input[type='checkbox'] { border-radius: 3px; }
  .opt input[type='radio']:checked { border-color: #b5502b; background: radial-gradient(circle, #6b3220 0 3px, #f0764a 4px, #f28b62 6px); }
  .opt input[type='checkbox']:checked {
    border-color: #b5502b;
    background-color: #f0784c;
    background-image: url("data:image/svg+xml,%3Csvg xmlns='http://www.w3.org/2000/svg' viewBox='0 0 12 12'%3E%3Cpath d='M2 6 5 9 11 1' fill='none' stroke='%235f3020' stroke-width='2'/%3E%3C/svg%3E");
  }
  .opt input:disabled { border-color: #bdbbb8; background-color: #dedddb; }
  .opt input[type='radio']:disabled:checked { border-color: #bdbbb8; background: radial-gradient(circle, #b9b7b4 0 3px, #e3e2e0 4px); }
  .opt input[type='checkbox']:disabled:checked {
    border-color: #bdbbb8; background-color: #e3e2e0;
    background-image: url("data:image/svg+xml,%3Csvg xmlns='http://www.w3.org/2000/svg' viewBox='0 0 12 12'%3E%3Cpath d='M2 6 5 9 11 1' fill='none' stroke='%23b5b3b0' stroke-width='2'/%3E%3C/svg%3E");
  }
  .focus { margin-left: -2px; padding: 0 1px; border: 1px solid #f0936d; border-radius: 3px; background: #f3dcd1; }

  .bar { display: flex; }
  .vert { flex-direction: column; }
  .cap { display: grid; place-items: center; width: 13px; height: 13px; border: 1px solid #c2c0bd; background: #f6f6f5; fill: #777; }
  .vert .cap:first-child { border-radius: 7px 7px 0 0; border-bottom: 0; }
  .vert .cap:last-child { border-radius: 0 0 7px 7px; border-top: 0; }
  .horiz .cap:first-child { border-radius: 7px 0 0 7px; border-right: 0; }
  .horiz .cap:last-child { border-radius: 0 7px 7px 0; border-left: 0; }
  .trough { flex: 1; background: #dcdbd9; }
  .thumb { display: grid; place-items: center; width: 100%; height: 13px; border: 1px solid #adaaa7; border-radius: 6px; background: linear-gradient(#fff, #e4e3e1); }
  .vert .thumb { background: linear-gradient(90deg, #fff, #e4e3e1); }
  .thumb b { width: 8px; height: 4px; background: repeating-linear-gradient(90deg, #b5b3b0 0 1px, transparent 1px 3px); }
  .vert .thumb b { width: 4px; height: 8px; background: repeating-linear-gradient(#b5b3b0 0 1px, transparent 1px 3px); }

  .status { display: grid; grid-template-columns: 62px 31px 1fr 12px; align-items: center; height: 21px; padding-left: 5px; }
  .status svg { align-self: end; }
</style>
